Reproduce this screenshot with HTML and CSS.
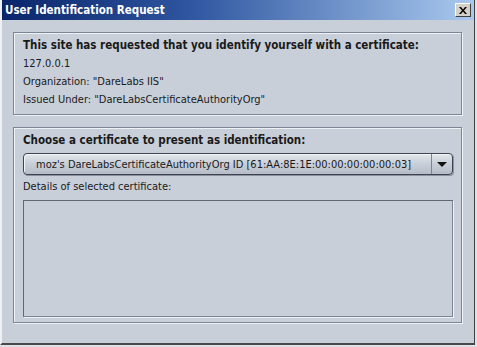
FILE: index.html
```html
<!DOCTYPE html>
<html lang="en">
<head>
  <meta charset="UTF-8" />
  <title>User Identification Request</title>
  <link rel="stylesheet" href="styles.css">
</head>
<body>

  <div class="window">
    <div class="titlebar">
      <span class="title">User Identification Request</span>
      <span class="close-btn">
        <svg width="8" height="7" viewBox="0 0 8 7">
          <path d="M0 0h2l2 2.5 2-2.5h2l-3 3.5 3 3.5h-2l-2-2.5-2 2.5h-2l3-3.5z" fill="#000"/>
        </svg>
      </span>
    </div>

    <div class="content">
      <div class="panel info">
        <p class="heading">This site has requested that you identify yourself with a certificate:</p>
        <p>127.0.0.1</p>
        <p>Organization: "DareLabs IIS"</p>
        <p>Issued Under: "DareLabsCertificateAuthorityOrg"</p>
      </div>

      <div class="panel choose">
        <p class="heading">Choose a certificate to present as identification:</p>
        <div class="dropdown">
          <span class="dropdown-text">moz's DareLabsCertificateAuthorityOrg ID [61:AA:8E:1E:00:00:00:00:00:03]</span>
          <span class="dropdown-arrow"></span>
        </div>
        <p class="details-label">Details of selected certificate:</p>
        <div class="details-box"></div>
      </div>
    </div>
  </div>

</body>
</html>
```

FILE: styles.css
```css
body {
  margin: 0;
  background: #dfe3e9;
  font-family: "DejaVu Sans Condensed", "DejaVu Sans", sans-serif;
  font-size: 11px;
  color: #1a1a1a;
}

p {
  margin: 0;
}

.window {
  width: 475px;
  height: 345px;
  box-sizing: border-box;
  background: #c8cfd9;
  border-left: 2px solid #eef0f3;
  border-right: 1px solid #404040;
  border-bottom: 2px solid #4a4a4a;
  display: flex;
  flex-direction: column;
}

.titlebar {
  height: 20px;
  display: flex;
  align-items: center;
  justify-content: space-between;
  padding: 0 3px 0 3px;
  background: linear-gradient(to right, #0a256a 0%, #2f56a0 40%, #a9c9ee 100%);
}

.title {
  color: #fff;
  font-weight: bold;
  font-size: 11.5px;
}

.close-btn {
  width: 16px;
  height: 14px;
  box-sizing: border-box;
  display: flex;
  align-items: center;
  justify-content: center;
  background: #d4d0c8;
  border: 1px solid;
  border-color: #fff #404040 #404040 #fff;
}

.content {
  padding: 12px 12px 0 11px;
  display: flex;
  flex-direction: column;
  gap: 12px;
}

.panel {
  border: 1px solid #7c8594;
  box-shadow: inset 1px 1px 0 #eef1f5, 1px 1px 0 #eef1f5;
  padding: 3px 8px 5px 9px;
}

.panel p {
  line-height: 18px;
}

.panel .heading {
  font-weight: bold;
  font-size: 11.5px;
  line-height: 19px;
}

.dropdown {
  margin-top: 3px;
  height: 22px;
  box-sizing: border-box;
  display: flex;
  align-items: center;
  border: 1px solid #3e4450;
  border-radius: 4px;
  background: linear-gradient(to bottom, #e2e6eb 0%, #c9cfd8 50%, #b6bdc8 100%);
  box-shadow: inset 1px 1px 0 #f4f6f9, 1px 1px 0 #8c939e;
}

.dropdown-text {
  flex: 1;
  padding-left: 12px;
  white-space: nowrap;
  overflow: hidden;
}

.dropdown-arrow {
  width: 20px;
  height: 100%;
  border-left: 1px solid #7c8594;
  display: flex;
  align-items: center;
  justify-content: center;
}

.dropdown-arrow::after {
  content: "";
  border-left: 5px solid transparent;
  border-right: 5px solid transparent;
  border-top: 5px solid #111;
}

.details-label {
  margin-top: 3px;
}

.details-box {
  margin-top: 4px;
  height: 117px;
  box-sizing: border-box;
  border: 1px solid #7c8594;
  border-top-color: #5f6775;
  border-left-color: #5f6775;
  box-shadow: 1px 1px 0 #eef1f5;
}
```
